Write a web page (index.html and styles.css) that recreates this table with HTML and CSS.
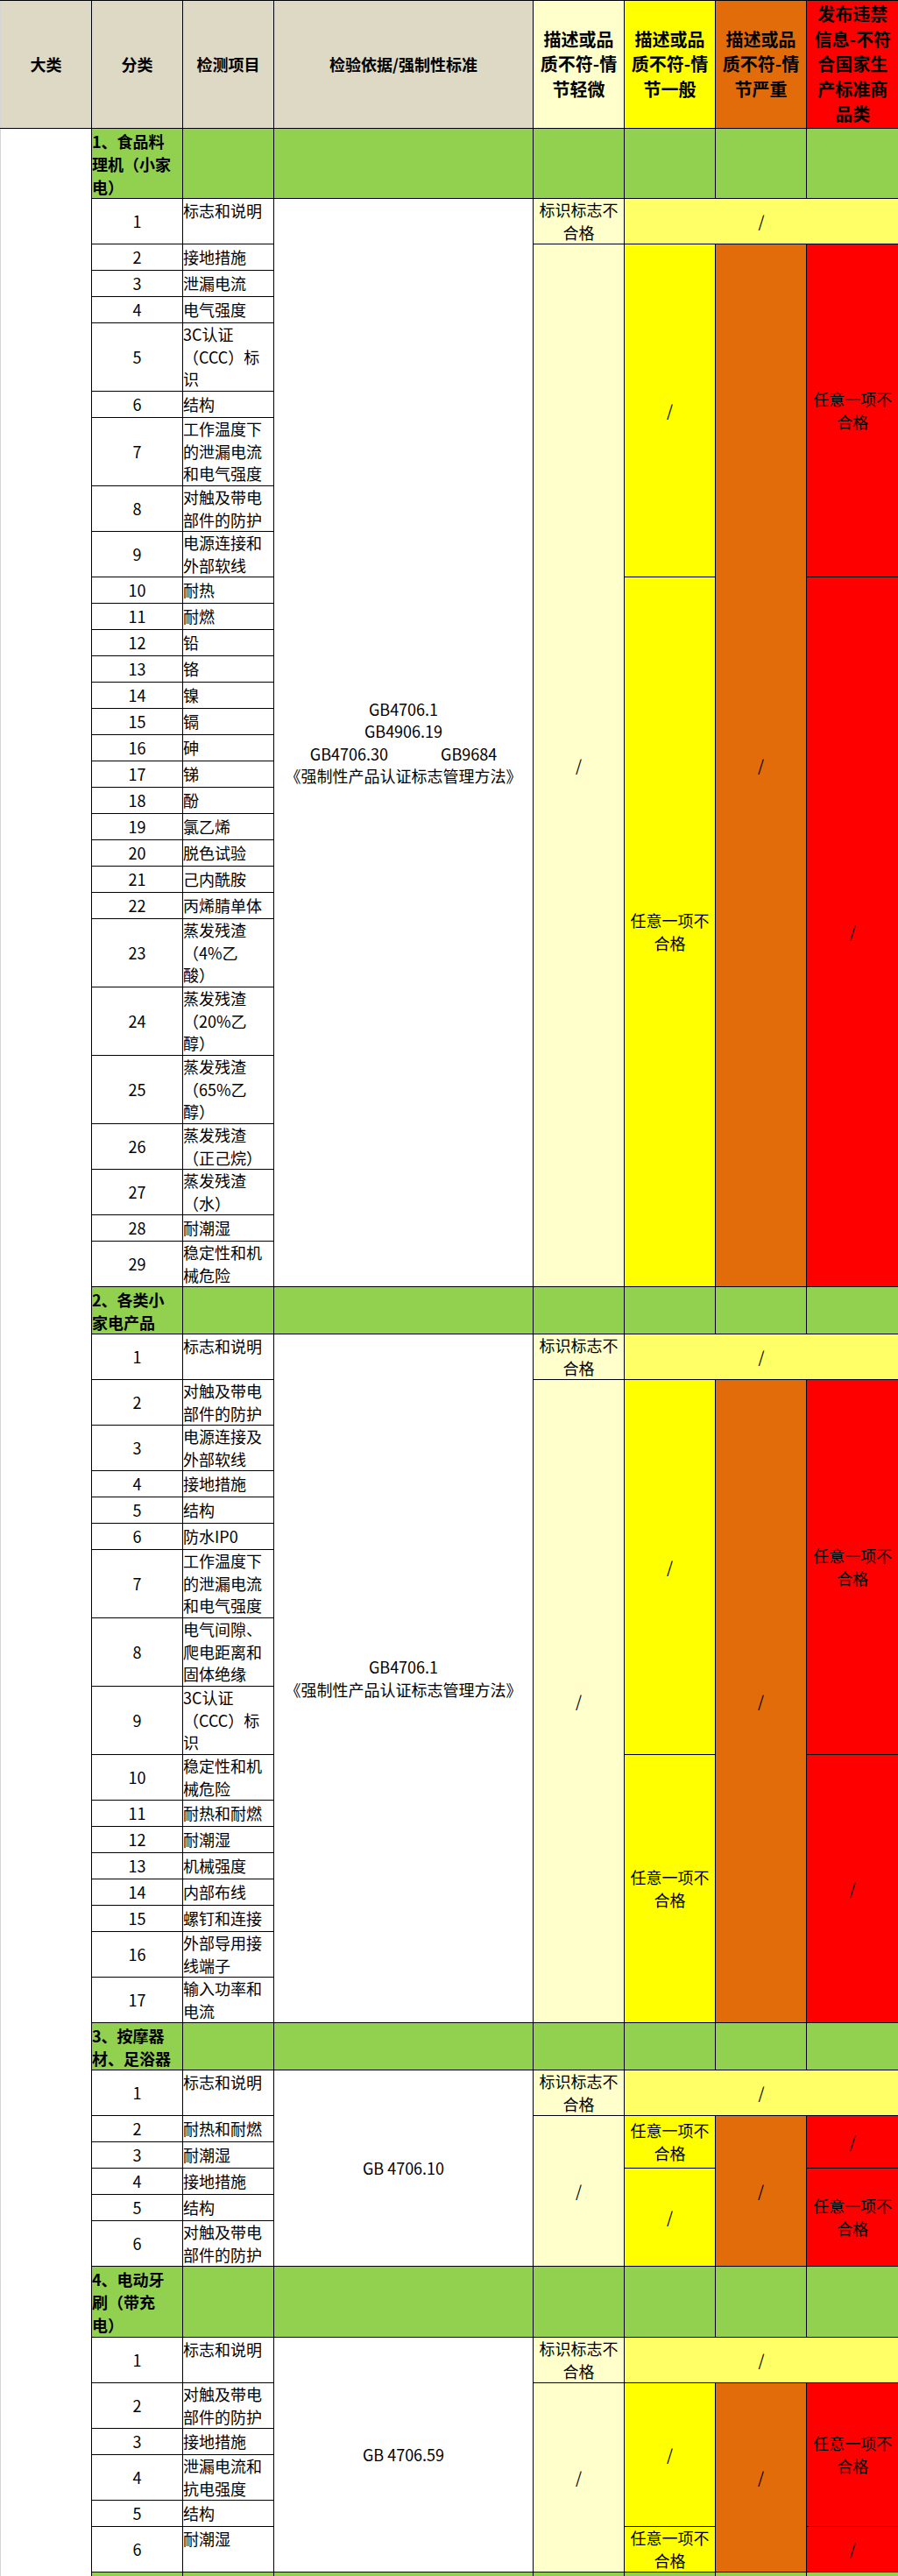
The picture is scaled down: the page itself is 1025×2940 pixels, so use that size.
FILE: index.html
```html
<!DOCTYPE html>
<html lang="zh-CN">
<head>
<meta charset="utf-8">
<title>检测项目</title>
<link rel="stylesheet" href="styles.css">
</head>
<body>
<table class="sheet">
<colgroup>
<col class="w104"><col class="w104"><col class="w104"><col class="w296"><col class="w104"><col class="w104"><col class="w104"><col class="w105">
</colgroup>
<thead>
<tr class="h146">
<th class="hd beige first">大类</th>
<th class="hd beige">分类</th>
<th class="hd beige">检测项目</th>
<th class="hd beige">检验依据/强制性标准</th>
<th class="hd big-hd c-ly">描述或品<br>质不符-情<br>节轻微</th>
<th class="hd big-hd c-y">描述或品<br>质不符-情<br>节一般</th>
<th class="hd big-hd c-o">描述或品<br>质不符-情<br>节严重</th>
<th class="hd big-hd c-r edge">发布违禁<br>信息-不符<br>合国家生<br>产标准商<br>品类</th>
</tr>
</thead>
<tbody>
<!-- section 1 -->
<tr class="h80">
<td class="bigcat" rowspan="63"></td>
<td class="grn gt">1、食品料<br>理机（小家<br>电）</td>
<td class="grn"></td><td class="grn"></td><td class="grn"></td><td class="grn"></td><td class="grn"></td><td class="grn edge"></td>
</tr>
<tr class="h52"><td class="num">1</td><td class="item top">标志和说明</td>
<td class="std" rowspan="29">GB4706.1<br>GB4906.19<br>GB4706.30<span class="gap"></span>GB9684<br>《强制性产品认证标志管理方法》</td>
<td class="lbl c-ly">标识标志不<br>合格</td><td class="lbl c-py" colspan="3">/</td></tr>
<tr class="h30"><td class="num">2</td><td class="item">接地措施</td>
<td class="lbl c-ly" rowspan="28">/</td><td class="lbl c-y" rowspan="8">/</td><td class="lbl c-o" rowspan="28">/</td><td class="lbl c-r edge" rowspan="8">任意一项不<br>合格</td></tr>
<tr class="h30"><td class="num">3</td><td class="item">泄漏电流</td></tr>
<tr class="h30"><td class="num">4</td><td class="item">电气强度</td></tr>
<tr class="h78"><td class="num">5</td><td class="item">3C认证<br>（CCC）标<br>识</td></tr>
<tr class="h30"><td class="num">6</td><td class="item">结构</td></tr>
<tr class="h78"><td class="num">7</td><td class="item">工作温度下<br>的泄漏电流<br>和电气强度</td></tr>
<tr class="h52"><td class="num">8</td><td class="item">对触及带电<br>部件的防护</td></tr>
<tr class="h52"><td class="num">9</td><td class="item">电源连接和<br>外部软线</td></tr>
<tr class="h30"><td class="num">10</td><td class="item">耐热</td>
<td class="lbl c-y" rowspan="20">任意一项不<br>合格</td><td class="lbl c-r edge" rowspan="20">/</td></tr>
<tr class="h30"><td class="num">11</td><td class="item">耐燃</td></tr>
<tr class="h30"><td class="num">12</td><td class="item">铅</td></tr>
<tr class="h30"><td class="num">13</td><td class="item">铬</td></tr>
<tr class="h30"><td class="num">14</td><td class="item">镍</td></tr>
<tr class="h30"><td class="num">15</td><td class="item">镉</td></tr>
<tr class="h30"><td class="num">16</td><td class="item">砷</td></tr>
<tr class="h30"><td class="num">17</td><td class="item">锑</td></tr>
<tr class="h30"><td class="num">18</td><td class="item">酚</td></tr>
<tr class="h30"><td class="num">19</td><td class="item">氯乙烯</td></tr>
<tr class="h30"><td class="num">20</td><td class="item">脱色试验</td></tr>
<tr class="h30"><td class="num">21</td><td class="item">己内酰胺</td></tr>
<tr class="h30"><td class="num">22</td><td class="item">丙烯腈单体</td></tr>
<tr class="h78"><td class="num">23</td><td class="item">蒸发残渣<br>（4%乙<br>酸）</td></tr>
<tr class="h78"><td class="num">24</td><td class="item">蒸发残渣<br>（20%乙<br>醇）</td></tr>
<tr class="h78"><td class="num">25</td><td class="item">蒸发残渣<br>（65%乙<br>醇）</td></tr>
<tr class="h52"><td class="num">26</td><td class="item">蒸发残渣<br>（正己烷）</td></tr>
<tr class="h52"><td class="num">27</td><td class="item">蒸发残渣<br>（水）</td></tr>
<tr class="h30"><td class="num">28</td><td class="item">耐潮湿</td></tr>
<tr class="h52"><td class="num">29</td><td class="item">稳定性和机<br>械危险</td></tr>
<!-- section 2 -->
<tr class="h54">
<td class="grn gt">2、各类小<br>家电产品</td>
<td class="grn"></td><td class="grn"></td><td class="grn"></td><td class="grn"></td><td class="grn"></td><td class="grn edge"></td>
</tr>
<tr class="h52"><td class="num">1</td><td class="item top">标志和说明</td>
<td class="std" rowspan="17">GB4706.1<br>《强制性产品认证标志管理方法》</td>
<td class="lbl c-ly">标识标志不<br>合格</td><td class="lbl c-py" colspan="3">/</td></tr>
<tr class="h52"><td class="num">2</td><td class="item">对触及带电<br>部件的防护</td>
<td class="lbl c-ly" rowspan="16">/</td><td class="lbl c-y" rowspan="8">/</td><td class="lbl c-o" rowspan="16">/</td><td class="lbl c-r edge" rowspan="8">任意一项不<br>合格</td></tr>
<tr class="h52"><td class="num">3</td><td class="item">电源连接及<br>外部软线</td></tr>
<tr class="h30"><td class="num">4</td><td class="item">接地措施</td></tr>
<tr class="h30"><td class="num">5</td><td class="item">结构</td></tr>
<tr class="h30"><td class="num">6</td><td class="item">防水IP0</td></tr>
<tr class="h78"><td class="num">7</td><td class="item">工作温度下<br>的泄漏电流<br>和电气强度</td></tr>
<tr class="h78"><td class="num">8</td><td class="item">电气间隙、<br>爬电距离和<br>固体绝缘</td></tr>
<tr class="h78"><td class="num">9</td><td class="item">3C认证<br>（CCC）标<br>识</td></tr>
<tr class="h52"><td class="num">10</td><td class="item">稳定性和机<br>械危险</td>
<td class="lbl c-y" rowspan="8">任意一项不<br>合格</td><td class="lbl c-r edge" rowspan="8">/</td></tr>
<tr class="h30"><td class="num">11</td><td class="item">耐热和耐燃</td></tr>
<tr class="h30"><td class="num">12</td><td class="item">耐潮湿</td></tr>
<tr class="h30"><td class="num">13</td><td class="item">机械强度</td></tr>
<tr class="h30"><td class="num">14</td><td class="item">内部布线</td></tr>
<tr class="h30"><td class="num">15</td><td class="item">螺钉和连接</td></tr>
<tr class="h52"><td class="num">16</td><td class="item">外部导用接<br>线端子</td></tr>
<tr class="h52"><td class="num">17</td><td class="item">输入功率和<br>电流</td></tr>
<!-- section 3 -->
<tr class="h54">
<td class="grn gt">3、按摩器<br>材、足浴器</td>
<td class="grn"></td><td class="grn"></td><td class="grn"></td><td class="grn"></td><td class="grn"></td><td class="grn edge"></td>
</tr>
<tr class="h52"><td class="num">1</td><td class="item top">标志和说明</td>
<td class="std" rowspan="6">GB 4706.10</td>
<td class="lbl c-ly">标识标志不<br>合格</td><td class="lbl c-py" colspan="3">/</td></tr>
<tr class="h30"><td class="num">2</td><td class="item">耐热和耐燃</td>
<td class="lbl c-ly" rowspan="5">/</td><td class="lbl c-y" rowspan="2">任意一项不<br>合格</td><td class="lbl c-o" rowspan="5">/</td><td class="lbl c-r edge" rowspan="2">/</td></tr>
<tr class="h30"><td class="num">3</td><td class="item">耐潮湿</td></tr>
<tr class="h30"><td class="num">4</td><td class="item">接地措施</td>
<td class="lbl c-y" rowspan="3">/</td><td class="lbl c-r edge" rowspan="3">任意一项不<br>合格</td></tr>
<tr class="h30"><td class="num">5</td><td class="item">结构</td></tr>
<tr class="h52"><td class="num">6</td><td class="item">对触及带电<br>部件的防护</td></tr>
<!-- section 4 -->
<tr class="h81">
<td class="grn gt">4、电动牙<br>刷（带充<br>电）</td>
<td class="grn"></td><td class="grn"></td><td class="grn"></td><td class="grn"></td><td class="grn"></td><td class="grn edge"></td>
</tr>
<tr class="h52"><td class="num">1</td><td class="item top">标志和说明</td>
<td class="std" rowspan="6">GB 4706.59</td>
<td class="lbl c-ly">标识标志不<br>合格</td><td class="lbl c-py" colspan="3">/</td></tr>
<tr class="h52"><td class="num">2</td><td class="item">对触及带电<br>部件的防护</td>
<td class="lbl c-ly" rowspan="5">/</td><td class="lbl c-y" rowspan="4">/</td><td class="lbl c-o" rowspan="5">/</td><td class="lbl c-r edge" rowspan="4">任意一项不<br>合格</td></tr>
<tr class="h30"><td class="num">3</td><td class="item">接地措施</td></tr>
<tr class="h52"><td class="num">4</td><td class="item">泄漏电流和<br>抗电强度</td></tr>
<tr class="h30"><td class="num">5</td><td class="item">结构</td></tr>
<tr class="h52"><td class="num">6</td><td class="item top">耐潮湿</td>
<td class="lbl c-y">任意一项不<br>合格</td><td class="lbl c-r edge">/</td></tr>
<!-- section 5 (cut off) -->
<tr class="h54">
<td class="grn gt"></td>
<td class="grn"></td><td class="grn"></td><td class="grn"></td><td class="grn"></td><td class="grn"></td><td class="grn edge"></td>
</tr>
</tbody>
</table>
</body>
</html>
```

FILE: styles.css
```css
html, body {
  margin: 0;
  padding: 0;
  background: #ffffff;
}

body {
  font-family: "Noto Sans CJK SC", "Noto Sans", sans-serif;
  color: #000000;
  overflow-x: hidden;
}

.sheet {
  border-collapse: collapse;
  table-layout: fixed;
  width: 1025px;
}

.w104 { width: 104px; }
.w105 { width: 105px; }
.w296 { width: 296px; }

.sheet th,
.sheet td {
  border: 1px solid #000000;
  padding: 0;
  font-size: 18px;
  line-height: 25.5px;
  vertical-align: middle;
  white-space: nowrap;
  overflow: hidden;
}

.h146 { height: 146px; }
.h30 { height: 30px; }
.h52 { height: 52px; }
.h54 { height: 54px; }
.h78 { height: 78px; }
.h80 { height: 80px; }
.h81 { height: 81px; }

/* header */
.hd {
  font-weight: bold;
  text-align: center;
  border-top: 1px solid #d4d4d4;
}
.beige { background: #ddd9c4; }
.hd.first { border-left: 1px solid #d4d4d4; }
.sheet .big-hd {
  font-size: 20px;
  line-height: 28.5px;
}

/* colours */
.c-ly { background: #ffffcc; }
.c-y { background: #ffff00; }
.c-o { background: #e26b0a; }
.c-r { background: #ff0000; }
.c-py { background: #ffff66; }
.grn { background: #92d050; }

.sheet .edge { border-right: none; }

/* first column (大类) */
.sheet .bigcat {
  background: #ffffff;
  border-left: 1px solid #d4d4d4;
  border-bottom: none;
}

/* group rows */
.gt {
  font-weight: bold;
  text-align: left;
  padding-left: 3px;
}
.sheet .gt { line-height: 26px; }

/* body cells */
.num { text-align: center; }
.item {
  text-align: left;
  padding-left: 3px;
}
.sheet .top {
  vertical-align: top;
  padding-top: 1px;
}
.std { text-align: center; }
.gap {
  display: inline-block;
  width: 60px;
}
.lbl { text-align: center; }
```
